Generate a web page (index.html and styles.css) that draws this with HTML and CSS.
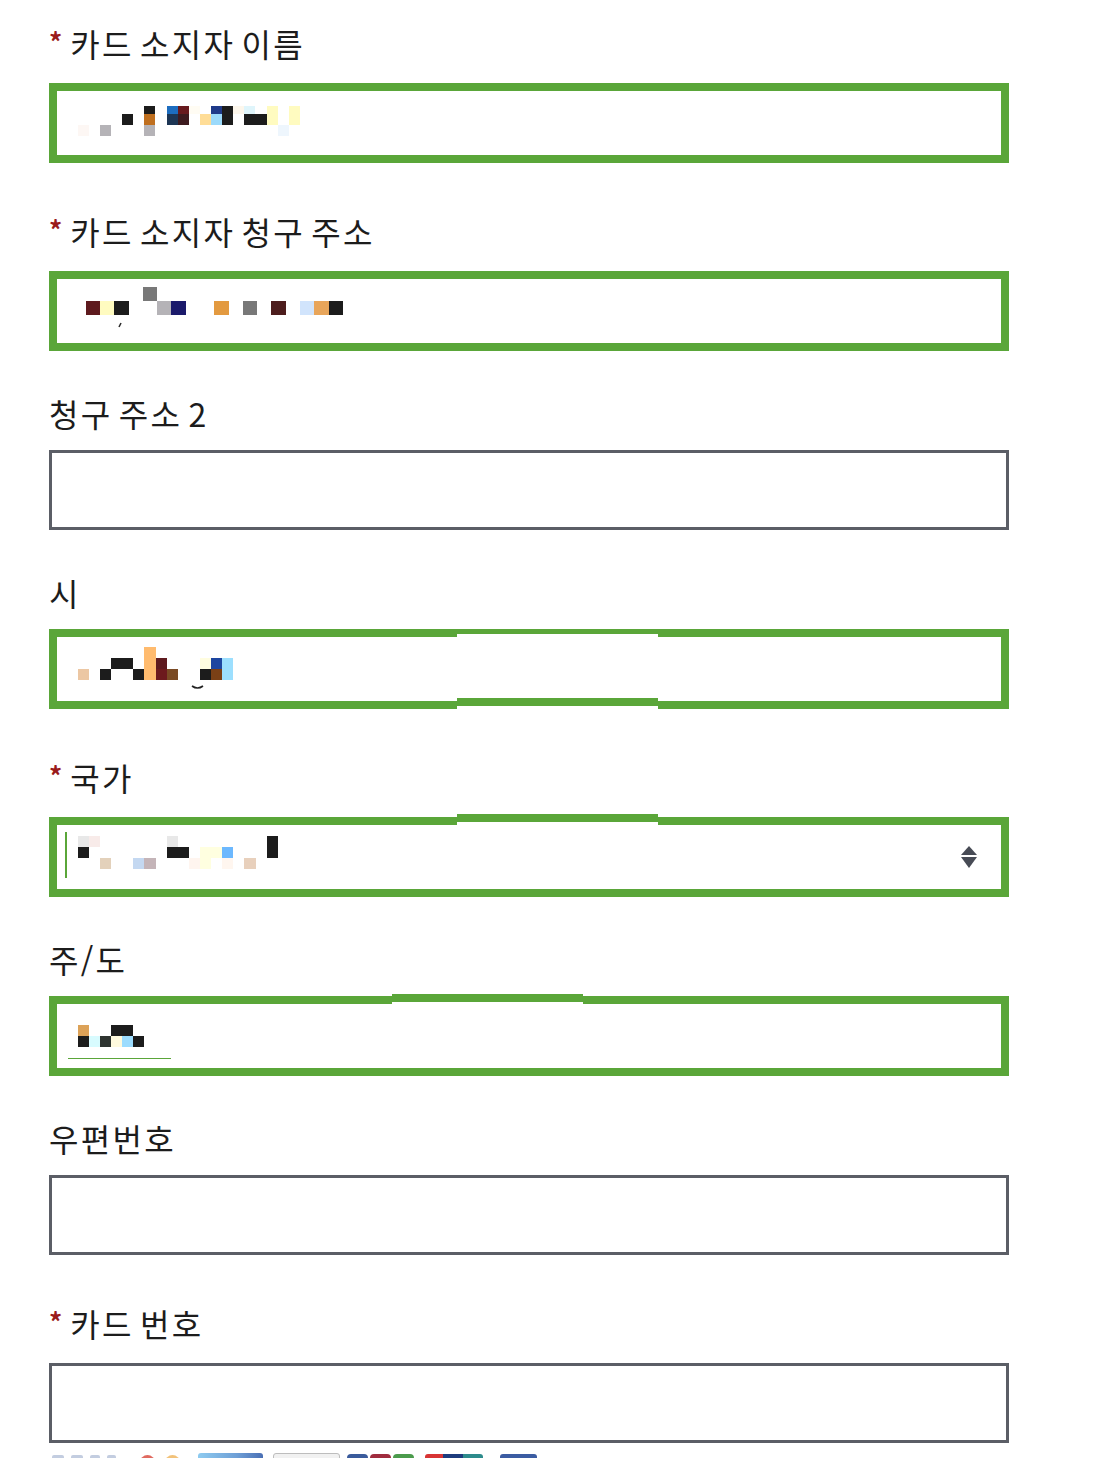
FILE: index.html
```html
<!DOCTYPE html>
<html lang="ko">
<head>
<meta charset="utf-8">
<title>결제 정보</title>
<link rel="stylesheet" href="styles.css">
</head>
<body>
<form class="form">
  <div class="field">
    <label class="label required"><span class="req">*</span>카드 소지자 이름</label>
    <div class="input focus">
      <svg class="art" width="944" height="64" viewBox="0 0 944 64">
        <rect x="87" y="15" width="11" height="8" fill="#1c1c1c"/>
        <rect x="110" y="15" width="11" height="8" fill="#1d6dbf"/>
        <rect x="121" y="15" width="11" height="8" fill="#681a1e"/>
        <rect x="132" y="15" width="11" height="8" fill="#fffcf3"/>
        <rect x="154" y="15" width="11" height="8" fill="#1f3a89"/>
        <rect x="165" y="15" width="11" height="8" fill="#1c1c1c"/>
        <rect x="176" y="15" width="11" height="8" fill="#fdf7ec"/>
        <rect x="187" y="15" width="11" height="8" fill="#dff5fb"/>
        <rect x="210" y="15" width="11" height="8" fill="#fffbc0"/>
        <rect x="232" y="15" width="11" height="8" fill="#fffbc0"/>
        <rect x="65" y="23" width="11" height="11" fill="#1c1c1c"/>
        <rect x="87" y="23" width="11" height="11" fill="#bf6f1f"/>
        <rect x="110" y="23" width="11" height="11" fill="#1d3655"/>
        <rect x="121" y="23" width="11" height="11" fill="#3d1b1f"/>
        <rect x="143" y="23" width="11" height="11" fill="#ffdd97"/>
        <rect x="154" y="23" width="11" height="11" fill="#9cdafb"/>
        <rect x="165" y="23" width="11" height="11" fill="#1c1c1c"/>
        <rect x="187" y="23" width="23" height="11" fill="#1c1c1c"/>
        <rect x="210" y="23" width="11" height="11" fill="#fffbc0"/>
        <rect x="232" y="23" width="11" height="11" fill="#fffbc0"/>
        <rect x="21" y="34" width="11" height="11" fill="#fdf7f4"/>
        <rect x="43" y="34" width="11" height="11" fill="#b5b3b7"/>
        <rect x="87" y="34" width="11" height="11" fill="#b5b3b7"/>
        <rect x="221" y="34" width="11" height="11" fill="#eef6fd"/>
      </svg>
    </div>
  </div>

  <div class="field">
    <label class="label required"><span class="req">*</span>카드 소지자 청구 주소</label>
    <div class="input focus">
      <svg class="art" width="944" height="64" viewBox="0 0 944 64">
        <rect x="86" y="8" width="14" height="14" fill="#787878"/>
        <rect x="29" y="22" width="14" height="14" fill="#5e1a1e"/>
        <rect x="43" y="22" width="14" height="14" fill="#fffbc0"/>
        <rect x="57" y="22" width="15" height="14" fill="#1c1c1c"/>
        <rect x="100" y="22" width="14" height="14" fill="#b5b3b7"/>
        <rect x="114" y="22" width="15" height="14" fill="#1b1a6b"/>
        <rect x="157" y="22" width="15" height="14" fill="#e39a40"/>
        <rect x="186" y="22" width="14" height="14" fill="#787878"/>
        <rect x="214" y="22" width="15" height="14" fill="#4d1d1d"/>
        <rect x="243" y="22" width="14" height="14" fill="#d1e4fc"/>
        <rect x="257" y="22" width="15" height="14" fill="#e8a55a"/>
        <rect x="272" y="22" width="14" height="14" fill="#1c1c1c"/>
        <path d="M64 44 L62 48" stroke="#2a2a2a" stroke-width="1.5" fill="none"/>
      </svg>
    </div>
  </div>

  <div class="field">
    <label class="label">청구 주소 2</label>
    <div class="input"></div>
  </div>

  <div class="field">
    <label class="label">시</label>
    <div class="input focus">
      <svg class="art" width="944" height="64" viewBox="0 0 944 64">
        <rect x="87" y="10" width="12" height="33" fill="#ffbb6e"/>
        <rect x="54" y="21" width="22" height="11" fill="#1c1c1c"/>
        <rect x="99" y="21" width="11" height="11" fill="#5e1a1e"/>
        <rect x="143" y="21" width="11" height="11" fill="#fffde0"/>
        <rect x="154" y="21" width="11" height="11" fill="#1d46a0"/>
        <rect x="165" y="21" width="11" height="22" fill="#9cdffe"/>
        <rect x="21" y="32" width="11" height="11" fill="#ecc7a3"/>
        <rect x="43" y="32" width="11" height="11" fill="#1c1c1c"/>
        <rect x="76" y="32" width="11" height="11" fill="#1c1c1c"/>
        <rect x="99" y="32" width="11" height="11" fill="#6d1a1d"/>
        <rect x="110" y="32" width="11" height="11" fill="#7a4a24"/>
        <rect x="143" y="32" width="11" height="11" fill="#1c1c1c"/>
        <rect x="154" y="32" width="11" height="11" fill="#7a4016"/>
        <path d="M135 49 Q140.5 53 146 49" stroke="#222" stroke-width="1.6" fill="none"/>
      </svg>
      <div class="shift shift-a"></div>
      <div class="shift shift-b"></div>
    </div>
  </div>

  <div class="field">
    <label class="label required"><span class="req">*</span>국가</label>
    <div class="input focus">
      <svg class="art" width="944" height="64" viewBox="0 0 944 64">
        <rect x="8" y="7" width="2" height="46" fill="#5aa639"/>
        <rect x="21" y="11" width="11" height="11" fill="#e8e8e8"/>
        <rect x="32" y="11" width="11" height="11" fill="#f8ebe9"/>
        <rect x="110" y="11" width="11" height="11" fill="#e8e8e8"/>
        <rect x="210" y="11" width="11" height="22" fill="#1c1c1c"/>
        <rect x="21" y="22" width="11" height="11" fill="#1c1c1c"/>
        <rect x="110" y="22" width="22" height="11" fill="#1c1c1c"/>
        <rect x="143" y="22" width="22" height="11" fill="#ffffe0"/>
        <rect x="165" y="22" width="11" height="11" fill="#6cb8fe"/>
        <rect x="43" y="33" width="11" height="11" fill="#e3d1bb"/>
        <rect x="76" y="33" width="11" height="11" fill="#c4d8f1"/>
        <rect x="87" y="33" width="12" height="11" fill="#c4b4b8"/>
        <rect x="132" y="33" width="11" height="11" fill="#fff5ef"/>
        <rect x="143" y="33" width="11" height="11" fill="#ffffe0"/>
        <rect x="165" y="33" width="11" height="11" fill="#fff6ef"/>
        <rect x="187" y="33" width="12" height="11" fill="#e8d0bc"/>
        <path d="M912 21 L920 30 L904 30 Z" fill="#474b55"/>
        <path d="M904 32 L920 32 L912 43 Z" fill="#474b55"/>
      </svg>
      <div class="shift shift-c"></div>
    </div>
  </div>

  <div class="field">
    <label class="label">주/도</label>
    <div class="input focus">
      <svg class="art" width="944" height="64" viewBox="0 0 944 64">
        <rect x="21" y="21" width="11" height="11" fill="#dca258"/>
        <rect x="54" y="21" width="22" height="11" fill="#1c1c1c"/>
        <rect x="21" y="32" width="11" height="11" fill="#1c1c1c"/>
        <rect x="32" y="32" width="11" height="11" fill="#d8fbfe"/>
        <rect x="43" y="32" width="11" height="11" fill="#2e3430"/>
        <rect x="54" y="32" width="11" height="11" fill="#fffade"/>
        <rect x="65" y="32" width="11" height="11" fill="#9cdcfe"/>
        <rect x="76" y="32" width="11" height="11" fill="#1c1c1c"/>
        <rect x="11" y="54" width="103" height="1" fill="#5aa639"/>
      </svg>
      <div class="shift shift-d"></div>
    </div>
  </div>

  <div class="field">
    <label class="label">우편번호</label>
    <div class="input"></div>
  </div>

  <div class="field last">
    <label class="label required"><span class="req">*</span>카드 번호</label>
    <div class="input"></div>
    <div class="cards">
      <div class="card visa"><i></i><i></i><i></i><i></i></div>
      <div class="card mc"><i class="mc-r"></i><i class="mc-o"></i></div>
      <div class="card amex"></div>
      <div class="card generic"></div>
      <div class="card jcb"><i class="j1"></i><i class="j2"></i><i class="j3"></i></div>
      <div class="card union"><i class="u1"></i><i class="u2"></i><i class="u3"></i></div>
      <div class="card disc"></div>
    </div>
  </div>
</form>
</body>
</html>
```

FILE: styles.css
```css
html, body {
  margin: 0;
  padding: 0;
  background: #ffffff;
}

body {
  font-family: "Noto Sans CJK KR", "Noto Sans", sans-serif;
  color: #1c1c1c;
  overflow: hidden;
}

.form {
  width: 960px;
  margin: 0 0 0 49px;
  padding-top: 15px;
}

.field {
  margin-bottom: 40px;
}

.field.last {
  margin-bottom: 0;
}

.label {
  display: block;
  font-size: 32px;
  line-height: 44px;
  letter-spacing: 2.3px;
  word-spacing: -5px;
  margin-bottom: 15px;
  white-space: nowrap;
}

.label.required {
  padding-top: 6px;
  padding-bottom: 3px;
}

.req {
  display: inline-block;
  color: #9a1b1b;
  font-size: 26px;
  font-weight: 700;
  letter-spacing: 0;
  line-height: 0;
  vertical-align: 5px;
  margin-right: 8px;
  margin-left: 0;
}

.input {
  box-sizing: border-box;
  height: 80px;
  border: 3px solid #5b5e66;
  background: #ffffff;
  position: relative;
}

.input.focus {
  border: 8px solid #5aa639;
}

.art {
  display: block;
}

/* shifted strips from the captured screen (overlays on the border) */
.shift {
  position: absolute;
  box-sizing: content-box;
  border-top: 8px solid #5aa639;
  background: #ffffff;
}

.shift-a {
  left: 400px;
  width: 201px;
  top: -8px;
  border-top-width: 5px;
  height: 3px;
}

.shift-b {
  left: 400px;
  width: 201px;
  top: 61px;
  height: 3px;
}

.shift-c {
  left: 400px;
  width: 201px;
  top: -11px;
  height: 3px;
}

.shift-d {
  left: 335px;
  width: 191px;
  top: -10px;
  height: 2px;
}

.cards {
  display: flex;
  margin-top: 8px;
  padding-left: 3px;
  height: 40px;
}

.card {
  height: 30px;
  border-radius: 3px;
  display: flex;
}

.visa {
  width: 65px;
  padding-top: 4px;
  gap: 7px;
}

.visa i {
  display: block;
  width: 12px;
  height: 10px;
  background: #c3cde0;
  border-radius: 2px;
}

.visa i:nth-child(3) { width: 10px; }
.visa i:nth-child(4) { width: 9px; }

.mc {
  width: 40px;
  margin-left: 23px;
  padding-top: 4px;
  gap: 10px;
}

.mc i {
  display: block;
  width: 15px;
  height: 15px;
  border-radius: 50%;
}

.mc-r { background: #e06a60; }
.mc-o { background: #f2c27a; }

.amex {
  width: 65px;
  margin-left: 18px;
  margin-top: 2px;
  background: linear-gradient(90deg, #8ecbf0, #6e9fd6 60%, #4a6fb4);
}

.generic {
  width: 65px;
  margin-left: 10px;
  margin-top: 2px;
  border: 1px solid #bdbdbd;
  background: #f1f1f1;
}

.jcb {
  width: 67px;
  margin-left: 7px;
  margin-top: 3px;
  gap: 2px;
}

.jcb i {
  display: block;
  width: 21px;
  height: 30px;
  border-radius: 4px;
}

.j1 { background: #3a5b9c; }
.j2 { background: #a02c3e; }
.j3 { background: #4b9b4c; }

.union {
  width: 58px;
  margin-left: 11px;
  margin-top: 3px;
}

.union i {
  display: block;
  height: 30px;
}

.u1 { width: 18px; background: #d83434; border-radius: 3px 0 0 0; }
.u2 { width: 20px; background: #1d3c7d; }
.u3 { width: 20px; background: #2d8b8c; border-radius: 0 3px 0 0; }

.disc {
  width: 37px;
  margin-left: 17px;
  margin-top: 3px;
  background: #3b5ca2;
}
```
